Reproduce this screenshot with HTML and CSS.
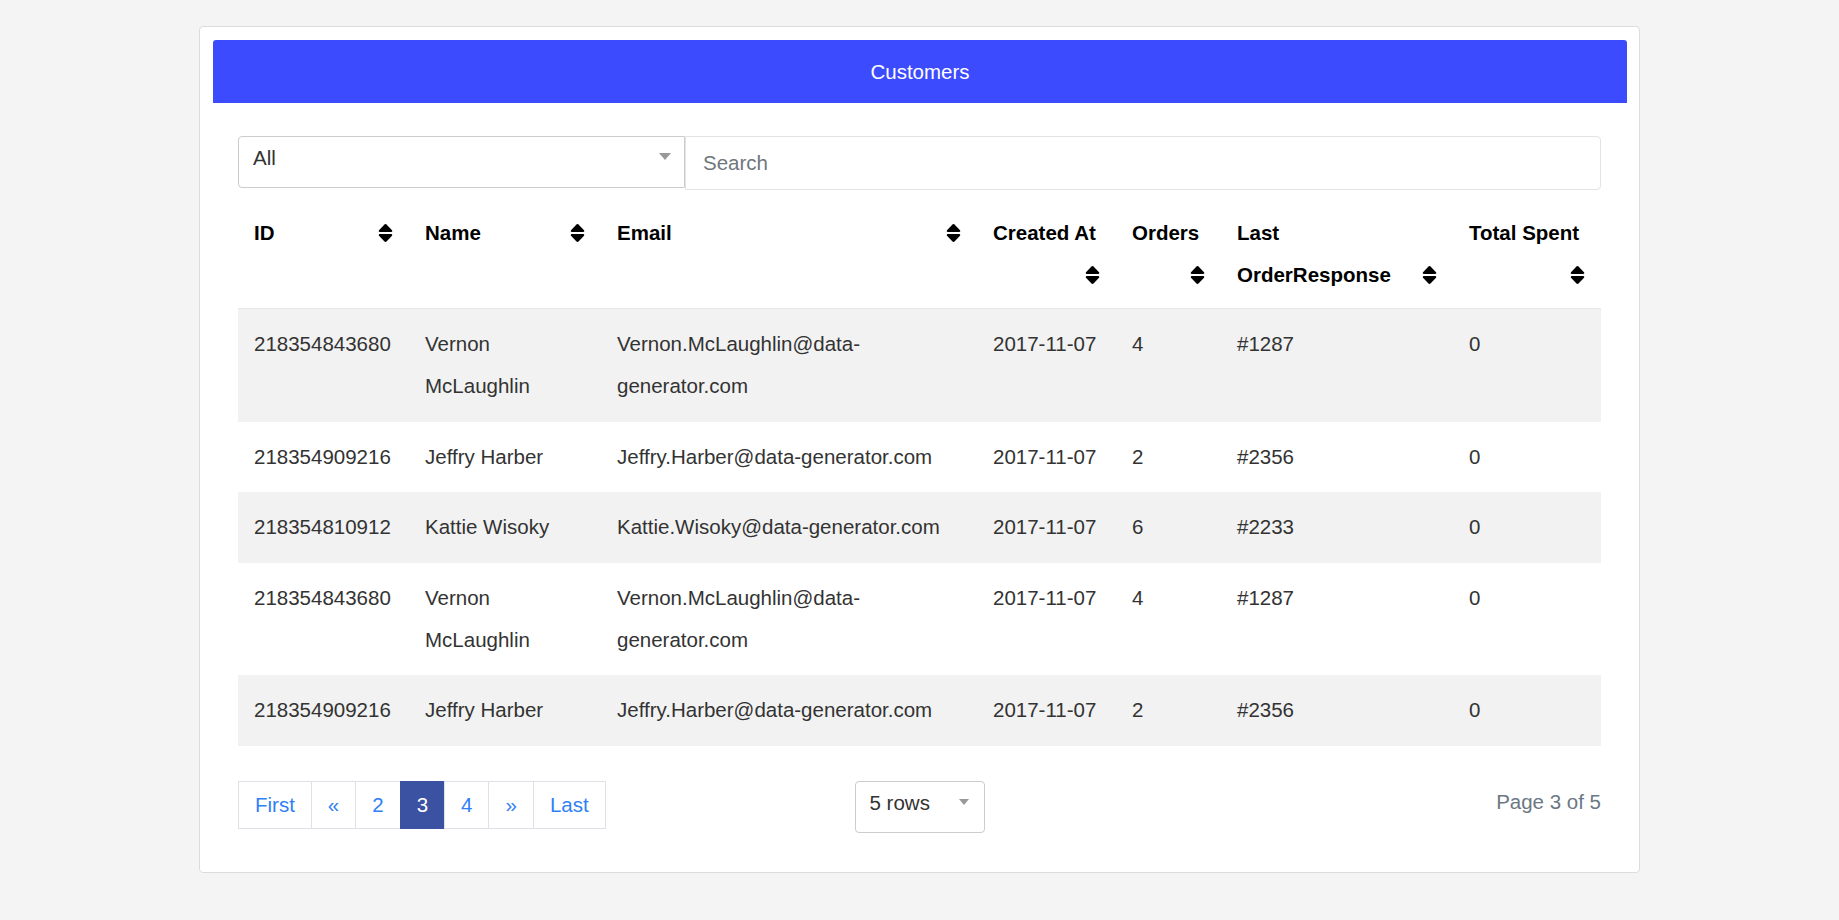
FILE: index.html
```html
<!DOCTYPE html>
<html lang="en">
<head>
<meta charset="utf-8">
<title>Customers</title>
<link rel="stylesheet" href="styles.css">
</head>
<body>
<div class="card">
  <div class="card-header">Customers</div>
  <div class="card-body">
    <div class="filters">
      <div class="select select-type"><span class="select-label">All</span><span class="caret"></span></div>
      <input class="search" type="text" placeholder="Search">
    </div>
    <table class="grid">
      <colgroup>
        <col class="c-id"><col class="c-name"><col class="c-email"><col class="c-created"><col class="c-orders"><col class="c-last"><col class="c-total">
      </colgroup>
      <thead>
        <tr>
          <th>ID<span class="sort"><svg viewBox="0 0 15 20" width="15" height="20"><path d="M7.5 1C7.9 1 8.2 1.2 8.5 1.5L14 7.2C14.6 7.9 14.2 9 13.2 9L1.8 9C0.8 9 0.4 7.9 1 7.2L6.5 1.5C6.8 1.2 7.1 1 7.5 1Z"/><path d="M1.8 11L13.2 11C14.2 11 14.6 12.1 14 12.8L8.5 18.5C8.2 18.8 7.9 19 7.5 19C7.1 19 6.8 18.8 6.5 18.5L1 12.8C0.4 12.1 0.8 11 1.8 11Z"/></svg></span></th>
          <th>Name<span class="sort"><svg viewBox="0 0 15 20" width="15" height="20"><path d="M7.5 1C7.9 1 8.2 1.2 8.5 1.5L14 7.2C14.6 7.9 14.2 9 13.2 9L1.8 9C0.8 9 0.4 7.9 1 7.2L6.5 1.5C6.8 1.2 7.1 1 7.5 1Z"/><path d="M1.8 11L13.2 11C14.2 11 14.6 12.1 14 12.8L8.5 18.5C8.2 18.8 7.9 19 7.5 19C7.1 19 6.8 18.8 6.5 18.5L1 12.8C0.4 12.1 0.8 11 1.8 11Z"/></svg></span></th>
          <th>Email<span class="sort"><svg viewBox="0 0 15 20" width="15" height="20"><path d="M7.5 1C7.9 1 8.2 1.2 8.5 1.5L14 7.2C14.6 7.9 14.2 9 13.2 9L1.8 9C0.8 9 0.4 7.9 1 7.2L6.5 1.5C6.8 1.2 7.1 1 7.5 1Z"/><path d="M1.8 11L13.2 11C14.2 11 14.6 12.1 14 12.8L8.5 18.5C8.2 18.8 7.9 19 7.5 19C7.1 19 6.8 18.8 6.5 18.5L1 12.8C0.4 12.1 0.8 11 1.8 11Z"/></svg></span></th>
          <th>Created At<span class="sort"><svg viewBox="0 0 15 20" width="15" height="20"><path d="M7.5 1C7.9 1 8.2 1.2 8.5 1.5L14 7.2C14.6 7.9 14.2 9 13.2 9L1.8 9C0.8 9 0.4 7.9 1 7.2L6.5 1.5C6.8 1.2 7.1 1 7.5 1Z"/><path d="M1.8 11L13.2 11C14.2 11 14.6 12.1 14 12.8L8.5 18.5C8.2 18.8 7.9 19 7.5 19C7.1 19 6.8 18.8 6.5 18.5L1 12.8C0.4 12.1 0.8 11 1.8 11Z"/></svg></span></th>
          <th>Orders<span class="sort"><svg viewBox="0 0 15 20" width="15" height="20"><path d="M7.5 1C7.9 1 8.2 1.2 8.5 1.5L14 7.2C14.6 7.9 14.2 9 13.2 9L1.8 9C0.8 9 0.4 7.9 1 7.2L6.5 1.5C6.8 1.2 7.1 1 7.5 1Z"/><path d="M1.8 11L13.2 11C14.2 11 14.6 12.1 14 12.8L8.5 18.5C8.2 18.8 7.9 19 7.5 19C7.1 19 6.8 18.8 6.5 18.5L1 12.8C0.4 12.1 0.8 11 1.8 11Z"/></svg></span></th>
          <th>Last OrderResponse<span class="sort"><svg viewBox="0 0 15 20" width="15" height="20"><path d="M7.5 1C7.9 1 8.2 1.2 8.5 1.5L14 7.2C14.6 7.9 14.2 9 13.2 9L1.8 9C0.8 9 0.4 7.9 1 7.2L6.5 1.5C6.8 1.2 7.1 1 7.5 1Z"/><path d="M1.8 11L13.2 11C14.2 11 14.6 12.1 14 12.8L8.5 18.5C8.2 18.8 7.9 19 7.5 19C7.1 19 6.8 18.8 6.5 18.5L1 12.8C0.4 12.1 0.8 11 1.8 11Z"/></svg></span></th>
          <th>Total Spent<span class="sort"><svg viewBox="0 0 15 20" width="15" height="20"><path d="M7.5 1C7.9 1 8.2 1.2 8.5 1.5L14 7.2C14.6 7.9 14.2 9 13.2 9L1.8 9C0.8 9 0.4 7.9 1 7.2L6.5 1.5C6.8 1.2 7.1 1 7.5 1Z"/><path d="M1.8 11L13.2 11C14.2 11 14.6 12.1 14 12.8L8.5 18.5C8.2 18.8 7.9 19 7.5 19C7.1 19 6.8 18.8 6.5 18.5L1 12.8C0.4 12.1 0.8 11 1.8 11Z"/></svg></span></th>
        </tr>
      </thead>
      <tbody>
        <tr class="shade"><td>218354843680</td><td>Vernon McLaughlin</td><td>Vernon.McLaughlin@data-generator.com</td><td>2017-11-07</td><td>4</td><td>#1287</td><td>0</td></tr>
        <tr><td>218354909216</td><td>Jeffry Harber</td><td>Jeffry.Harber@data-generator.com</td><td>2017-11-07</td><td>2</td><td>#2356</td><td>0</td></tr>
        <tr class="shade"><td>218354810912</td><td>Kattie Wisoky</td><td>Kattie.Wisoky@data-generator.com</td><td>2017-11-07</td><td>6</td><td>#2233</td><td>0</td></tr>
        <tr><td>218354843680</td><td>Vernon McLaughlin</td><td>Vernon.McLaughlin@data-generator.com</td><td>2017-11-07</td><td>4</td><td>#1287</td><td>0</td></tr>
        <tr class="shade"><td>218354909216</td><td>Jeffry Harber</td><td>Jeffry.Harber@data-generator.com</td><td>2017-11-07</td><td>2</td><td>#2356</td><td>0</td></tr>
      </tbody>
    </table>
    <div class="footer">
      <nav class="pager">
        <a class="pg">First</a>
        <a class="pg">«</a>
        <a class="pg">2</a>
        <a class="pg active">3</a>
        <a class="pg">4</a>
        <a class="pg">»</a>
        <a class="pg">Last</a>
      </nav>
      <div class="select rows-select"><span class="select-label">5 rows</span><span class="caret small"></span></div>
      <div class="page-info">Page 3 of 5</div>
    </div>
  </div>
</div>
</body>
</html>
```
FILE: styles.css
```css
html, body {
  margin: 0;
  padding: 0;
}
body {
  background: #f4f4f4;
  font-family: "Liberation Sans", Arial, sans-serif;
  font-size: 20.5px;
  color: #333;
}
.card {
  box-sizing: border-box;
  width: 1441px;
  margin: 26px auto 0;
  background: #fff;
  border: 1px solid #dcdcdc;
  border-radius: 4px;
  padding: 13px 12px 39px 13px;
}
.card-header {
  height: 63px;
  background: #3d4bff;
  color: #fff;
  border-radius: 3px 3px 0 0;
  display: flex;
  align-items: center;
  justify-content: center;
}
.card-body {
  padding: 33px 26px 0 25px;
}
.filters {
  display: flex;
  align-items: flex-start;
}
.select {
  box-sizing: border-box;
  border: 1px solid #cccccc;
  background: #fff;
  display: flex;
  justify-content: space-between;
  align-items: flex-start;
  line-height: 24px;
  color: #333;
}
.select-type {
  width: 447px;
  height: 52px;
  border-radius: 4px 0 0 4px;
  padding: 8.5px 13px 0 14px;
}
.select-type .caret {
  margin-top: 7px;
}
.caret {
  width: 0;
  height: 0;
  border-left: 6.5px solid transparent;
  border-right: 6.5px solid transparent;
  border-top: 7px solid #999;
}
.caret.small {
  border-left-width: 5.5px;
  border-right-width: 5.5px;
  border-top-width: 6px;
  margin-top: 8.5px;
}
.search {
  flex: 1;
  box-sizing: border-box;
  height: 54px;
  margin: 0;
  border: 1px solid #e3e3e3;
  border-radius: 0 4px 4px 0;
  padding: 0 17px;
  font-family: "Liberation Sans", Arial, sans-serif;
  font-size: 20.5px;
  color: #333;
  outline: none;
}
.search::placeholder {
  color: #6f767d;
}
.grid {
  width: 100%;
  table-layout: fixed;
  border-collapse: collapse;
  margin-top: 8px;
}
.c-id { width: 171px; }
.c-name { width: 192px; }
.c-email { width: 376px; }
.c-created { width: 139px; }
.c-orders { width: 105px; }
.c-last { width: 232px; }
.c-total { width: 148px; }
.grid th {
  text-align: left;
  vertical-align: top;
  font-weight: bold;
  color: #000;
  line-height: 42px;
  padding: 14px 16px 12px;
  border-bottom: 1px solid #e8e8e8;
}
.sort {
  float: right;
  height: 42px;
  display: flex;
  align-items: center;
}
.sort svg {
  display: block;
  fill: #000;
}
.grid td {
  vertical-align: top;
  line-height: 42px;
  padding: 14.25px 16px;
  color: #333;
}
.grid tr.shade td {
  background: #f2f2f2;
}
.footer {
  display: grid;
  grid-template-columns: 1fr auto 1fr;
  align-items: start;
  margin-top: 35.5px;
}
.pager {
  justify-self: start;
  display: flex;
}
.pg {
  box-sizing: border-box;
  height: 48px;
  line-height: 46px;
  padding: 0 16px;
  border: 1px solid #dee2e6;
  margin-left: -1px;
  color: #2f7ff7;
  background: #fff;
  cursor: pointer;
}
.pg:first-child {
  margin-left: 0;
}
.pg.active {
  background: #3b51a1;
  border-color: #3b51a1;
  color: #fff;
}
.rows-select {
  width: 130px;
  height: 52px;
  border-radius: 4px;
  padding: 8.5px 15px 0 14px;
}
.page-info {
  justify-self: end;
  color: #6b7884;
  line-height: 24px;
  margin-top: 9px;
}
```
